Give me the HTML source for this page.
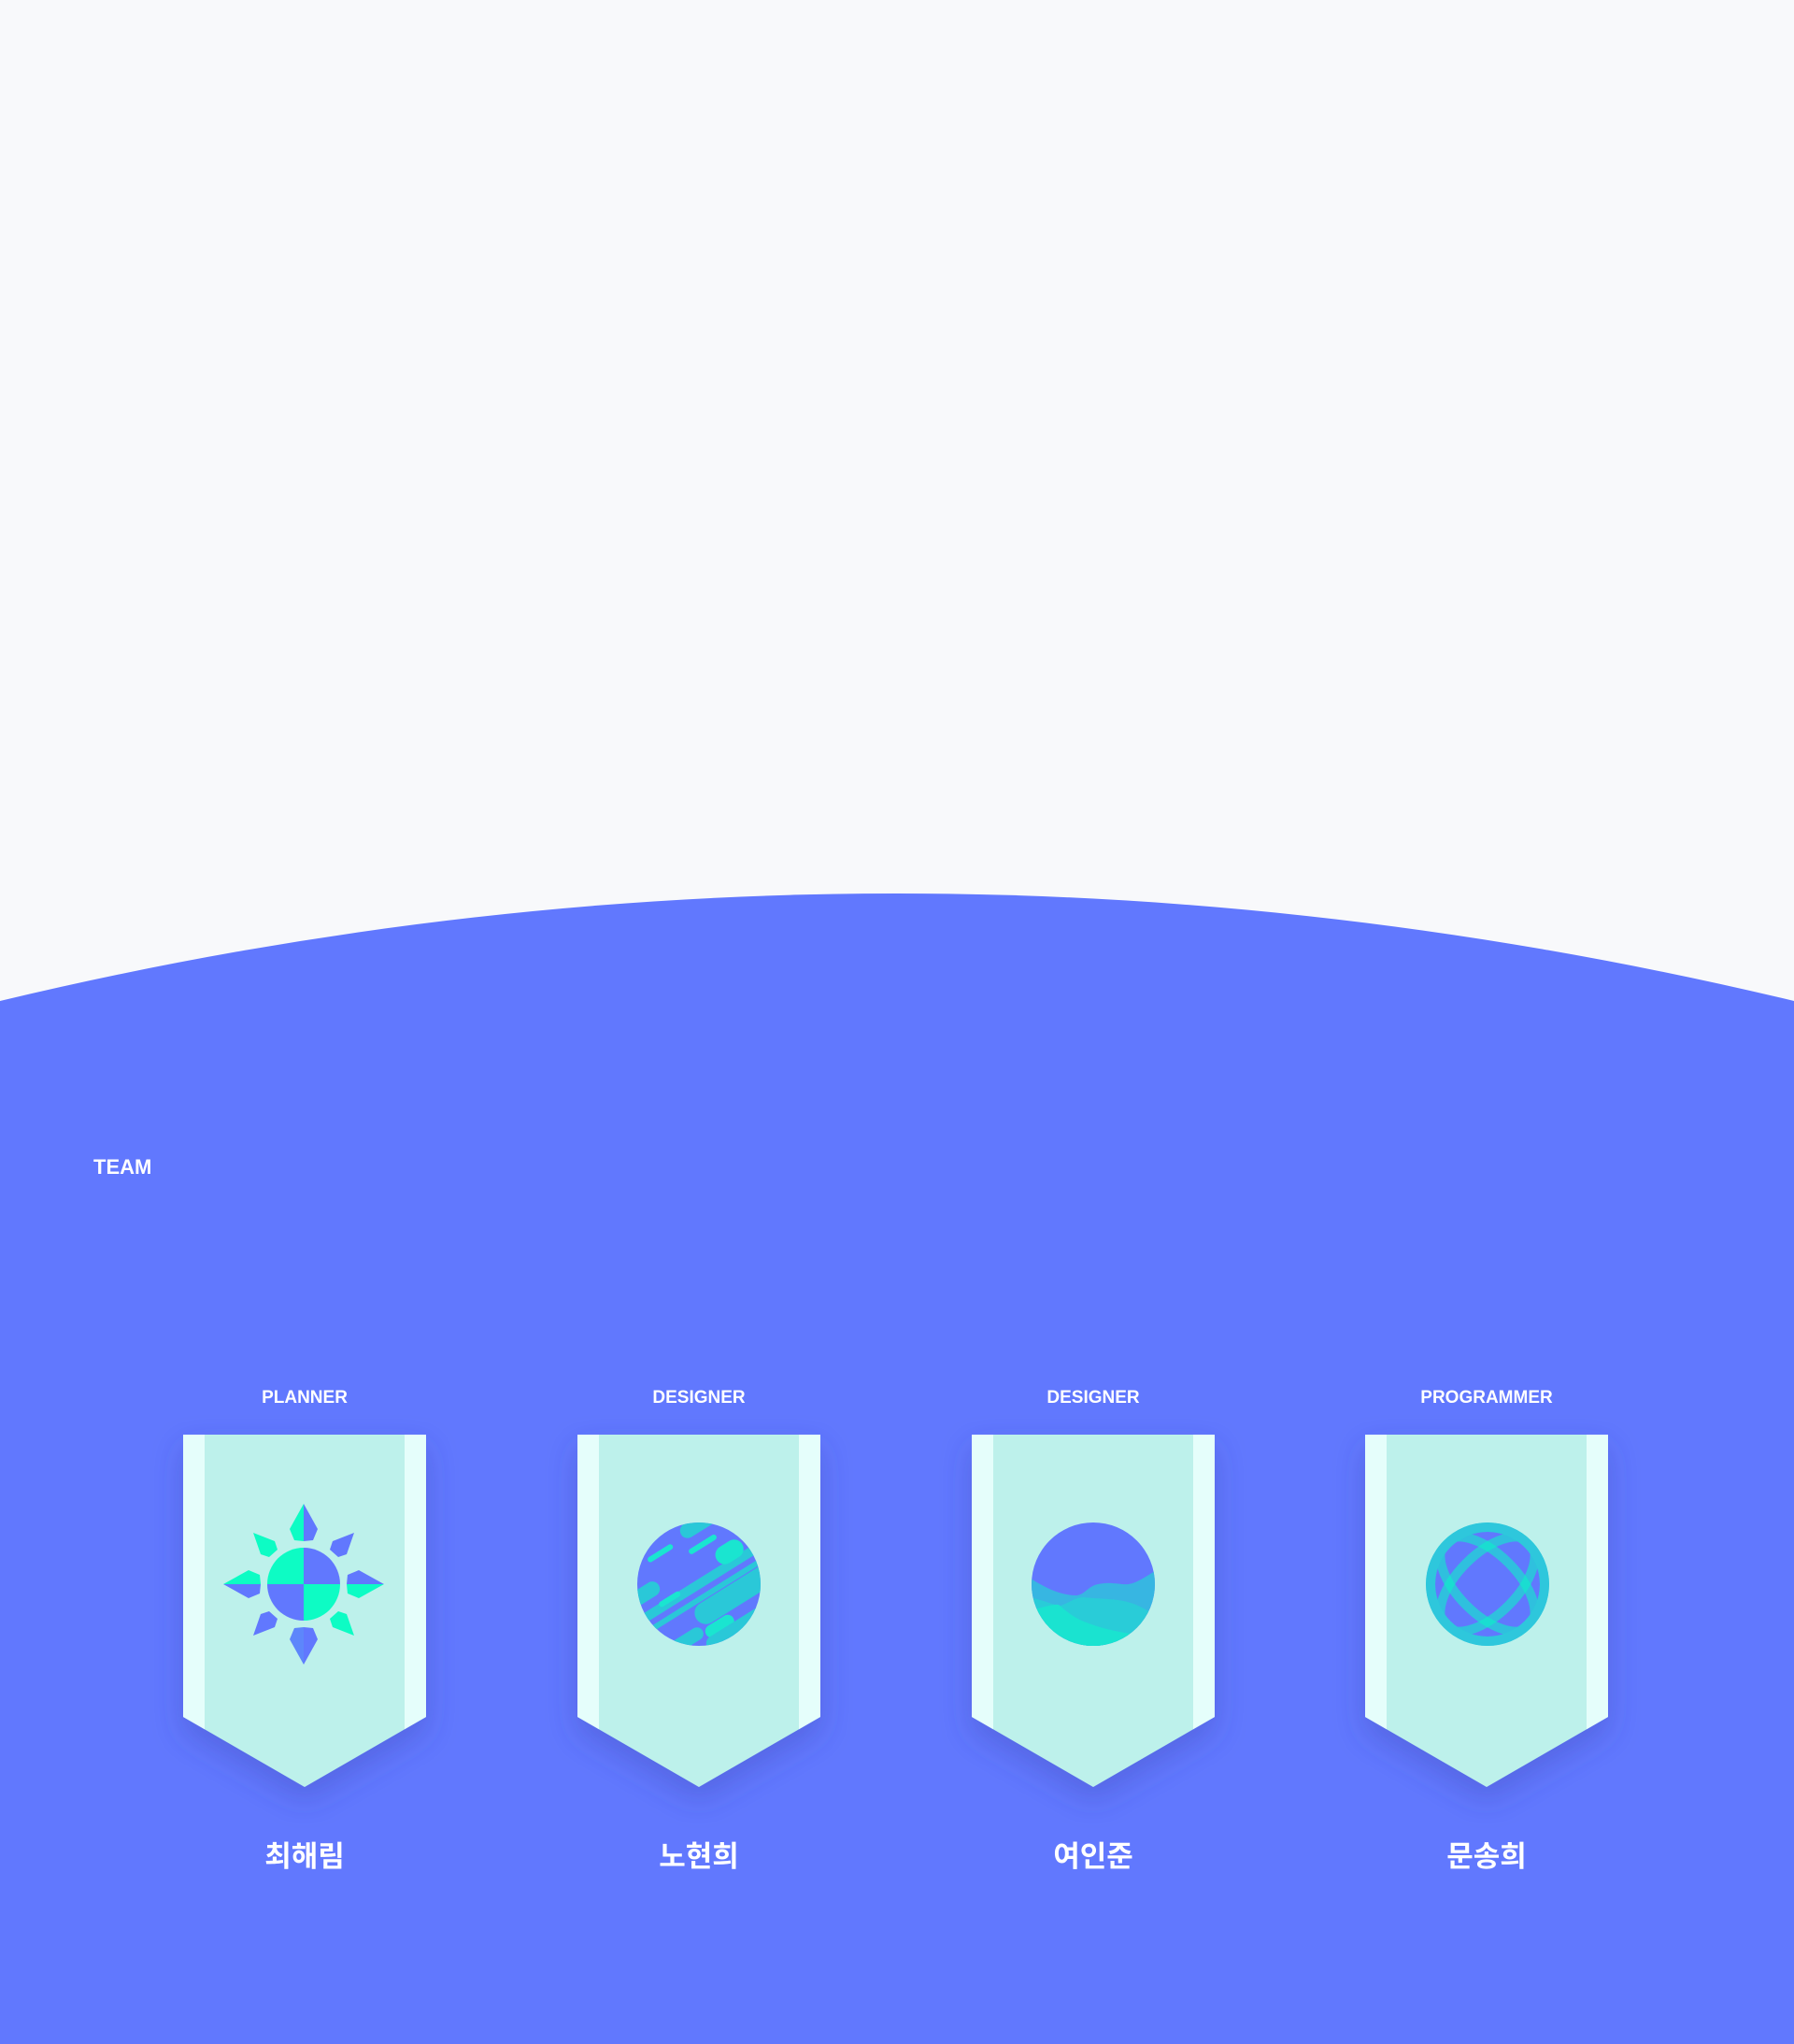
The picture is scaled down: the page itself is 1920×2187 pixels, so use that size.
<!DOCTYPE html>
<html><head><meta charset="utf-8">
<style>
html,body{margin:0;padding:0;}
body{width:1920px;height:2187px;position:relative;background:#f8f9fb;overflow:hidden;font-family:"Liberation Sans","Noto Sans CJK KR",sans-serif;}
svg.bg{position:absolute;left:0;top:0;}
.t{position:absolute;color:#fff;font-weight:bold;text-align:center;}
.role{font-size:19px;width:300px;top:1485px;}
.name{font-size:31px;width:300px;top:1961px;font-family:"Noto Sans CJK KR","Liberation Sans",sans-serif;}
</style></head><body>
<svg class="bg" width="1920" height="2187" viewBox="0 0 1920 2187">
<defs>
<filter id="sh" x="-30%" y="-20%" width="160%" height="160%"><feDropShadow dx="0" dy="14" stdDeviation="16" flood-color="#3a44b0" flood-opacity="0.35"/></filter>
<clipPath id="bn"><path d="M0 0H260V302L130 377L0 302Z"/></clipPath>
<clipPath id="c66"><circle cx="0" cy="0" r="66"/></clipPath>
<g id="banner">
<path d="M0 0H260V302L130 377L0 302Z" fill="#bdf1eb" filter="url(#sh)"/>
<g clip-path="url(#bn)"><rect x="0" y="0" width="23" height="400" fill="#e5fefb"/><rect x="237" y="0" width="23" height="400" fill="#e5fefb"/></g>
</g>
</defs>
<path d="M0 1071 Q960 841 1920 1071 V2187 H0Z" fill="#6178fe"/>
<use href="#banner" x="196" y="1535"/>
<use href="#banner" x="618" y="1535"/>
<use href="#banner" x="1040" y="1535"/>
<use href="#banner" x="1461" y="1535"/>

<g transform="translate(325,1695)">
<path d="M0 0V-39A39 39 0 0 0 -39 0Z" fill="#0dfcc4"/>
<path d="M0 0V-39A39 39 0 0 1 39 0Z" fill="#6178fe"/>
<path d="M0 0H-39A39 39 0 0 0 0 39Z" fill="#6178fe"/>
<path d="M0 0H39A39 39 0 0 1 0 39Z" fill="#0dfcc4"/>
<path d="M0 -86L-15 -59L-10 -47L0 -46Z" fill="#0dfcc4"/><path d="M0 -86L15 -59L10 -47L0 -46Z" fill="#6178fe"/>
<path d="M0 86L-15 59L-10 47L0 46Z" fill="#5d86fb"/><path d="M0 86L15 59L10 47L0 46Z" fill="#6178fe"/>
<path d="M-86 0L-59 -15L-47 -10L-46 0Z" fill="#0dfcc4"/><path d="M-86 0L-59 15L-47 10L-46 0Z" fill="#6178fe"/>
<path d="M86 0L59 -15L47 -10L46 0Z" fill="#6178fe"/><path d="M86 0L59 15L47 10L46 0Z" fill="#0dfcc4"/>
<path d="M-54 -55L-31 -46L-28 -37L-37 -29L-46 -32Z" fill="#0dfcc4"/>
<path d="M54 -55L31 -46L28 -37L37 -29L46 -32Z" fill="#6178fe"/>
<path d="M-54 55L-31 46L-28 37L-37 29L-46 32Z" fill="#6178fe"/>
<path d="M54 55L31 46L28 37L37 29L46 32Z" fill="#0dfcc4"/>
</g>

<g transform="translate(748,1695)">
<circle r="66" fill="#6178fe"/>
<g clip-path="url(#c66)"><g transform="rotate(-32)" stroke-linecap="round">
<line x1="20" y1="-55" x2="80" y2="-55" stroke="#2ac8d8" stroke-width="16"/>
<line x1="-30" y1="-50" x2="-5" y2="-50" stroke="#1ae5d0" stroke-width="6"/>
<line x1="12" y1="-34" x2="40" y2="-34" stroke="#1ae5d0" stroke-width="6"/>
<line x1="-90" y1="-22" x2="-45" y2="-22" stroke="#2ac8d8" stroke-width="16"/>
<line x1="-70" y1="0" x2="90" y2="0" stroke="#2ac8d8" stroke-width="10"/>
<line x1="40" y1="-12" x2="52" y2="-12" stroke="#1ae5d0" stroke-width="20"/>
<line x1="-45" y1="-3" x2="-25" y2="-3" stroke="#1ae5d0" stroke-width="6"/>
<line x1="-80" y1="14" x2="90" y2="14" stroke="#2ac8d8" stroke-width="6"/>
<line x1="-10" y1="30" x2="90" y2="30" stroke="#2ac8d8" stroke-width="24"/>
<line x1="-80" y1="44" x2="-30" y2="44" stroke="#2ac8d8" stroke-width="14"/>
<line x1="-15" y1="50" x2="5" y2="50" stroke="#1ae5d0" stroke-width="14"/>
<line x1="-20" y1="62" x2="90" y2="62" stroke="#2ac8d8" stroke-width="16"/>
</g></g>
</g>

<g transform="translate(1170,1695)">
<circle r="66" fill="#6178fe"/>
<g clip-path="url(#c66)">
<path d="M-70 -8C-50 5 -35 12 -17 12C-8 10 -5 2 5 0C20 -3 30 1 38 0C48 -2 56 -8 66 -14V80H-70Z" fill="#37b6e2"/>
<path d="M-70 14C-55 16 -45 22 -35 23C-25 20 -20 14 -10 14C5 16 25 15 40 20C50 23 55 27 62 30V80H-70Z" fill="#29ccd8"/>
<path d="M-70 28C-55 26 -45 21 -37 22C-30 28 -22 35 -10 40C5 46 20 50 40 53V80H-70Z" fill="#1ae3d0"/>
</g>
</g>

<g transform="translate(1592,1695)">
<circle r="66" fill="#2ec7dc"/>
<circle r="56" fill="#6178fe"/>
<g clip-path="url(#c66)" fill="none" stroke="rgb(13,240,200)" stroke-opacity="0.6" stroke-width="10">
<ellipse rx="64" ry="32" transform="rotate(45)"/>
<ellipse rx="64" ry="32" transform="rotate(-45)"/>
<circle r="61" stroke="#2ec7dc" stroke-opacity="1"/>
</g>
</g>
</svg>
<div class="t" style="left:100px;top:1236px;font-size:22px;">TEAM</div>
<div class="t role" style="left:176px;">PLANNER</div>
<div class="t role" style="left:598px;">DESIGNER</div>
<div class="t role" style="left:1020px;">DESIGNER</div>
<div class="t role" style="left:1441px;">PROGRAMMER</div>
<div class="t name" style="left:176px;">최해림</div>
<div class="t name" style="left:598px;">노현희</div>
<div class="t name" style="left:1020px;">여인준</div>
<div class="t name" style="left:1441px;">문송희</div>
</body></html>
